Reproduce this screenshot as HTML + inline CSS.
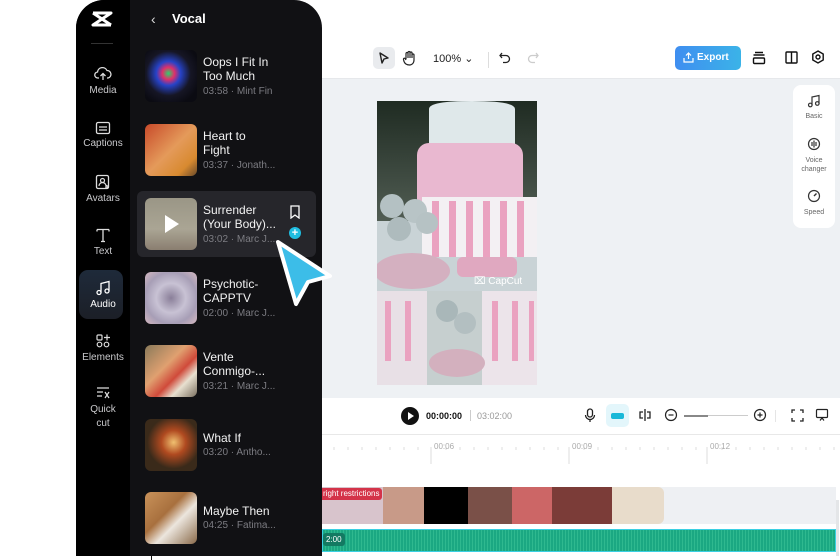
<!DOCTYPE html>
<html><head><meta charset="utf-8"><style>
*{margin:0;padding:0;box-sizing:border-box}
body{width:840px;height:560px;overflow:hidden;background:#fff;font-family:"Liberation Sans",sans-serif;position:relative}
.abs{position:absolute}
.topbar{left:322px;top:42px;width:518px;height:37px;background:#fff;border-bottom:1px solid #e6e8eb}
.canvas{left:322px;top:79px;width:518px;height:319px;background:#eef1f4}
.play{left:322px;top:398px;width:518px;height:37px;background:#fff;border-bottom:1px solid #e8e8e8}
.tl{left:322px;top:435px;width:518px;height:125px;background:#fff}
.panel{left:76px;top:0;width:246px;height:556px;background:#111114;border-radius:28px 28px 0 0;overflow:hidden}
.side{left:0;top:0;width:54px;height:556px;background:#000}
.si{position:absolute;left:0;width:54px;text-align:center;color:#c9c9cc;font-size:10px}
.si svg{display:block;margin:0 auto 3px}
.item{position:absolute;left:69px;width:175px;height:52px}
.th{position:absolute;left:0;top:0;width:52px;height:52px;border-radius:6px}
.tt{position:absolute;left:58px;color:#f2f2f2;font-size:12px;line-height:14px}
.sub{position:absolute;left:58px;color:#7c7c82;font-size:10px}
.rs{right:5px;width:42px;height:143px;background:#fff;border-radius:8px;position:absolute}
.rs div{text-align:center;font-size:7px;color:#666;position:absolute;width:42px}
</style></head><body>
<div class="abs topbar">
 <div class="abs" style="left:51px;top:5px;width:22px;height:22px;background:#e9ebee;border-radius:5px"></div>
 <svg class="abs" style="left:55px;top:9px" width="14" height="14" viewBox="0 0 14 14"><path d="M3 2 L11 7 L7 8 L5 12 Z" fill="none" stroke="#222" stroke-width="1.4" stroke-linejoin="round"/></svg>
 <svg class="abs" style="left:80px;top:8px" width="14" height="16" viewBox="0 0 14 16"><path d="M4 9V3.5a1 1 0 0 1 2 0V8M6 7V2.5a1 1 0 0 1 2 0V8M8 7V3a1 1 0 0 1 2 0v5M10 8V5a1 1 0 0 1 2 0v5c0 3-2 5-4.5 5S3 14 2 11.5L1.5 9.5a1 1 0 0 1 2-.5L4 10" fill="none" stroke="#222" stroke-width="1.2"/></svg>
 <div class="abs" style="left:111px;top:10px;font-size:11px;color:#222">100% ⌄</div>
 <div class="abs" style="left:166px;top:10px;width:1px;height:16px;background:#ddd"></div>
 <svg class="abs" style="left:176px;top:9px" width="13" height="13" viewBox="0 0 13 13"><path d="M4 2L2 4.5 4 7M2 4.5h6a3.5 3.5 0 0 1 0 7H5" fill="none" stroke="#222" stroke-width="1.3"/></svg>
 <svg class="abs" style="left:205px;top:9px" width="13" height="13" viewBox="0 0 13 13"><path d="M9 2l2 2.5L9 7M11 4.5H5a3.5 3.5 0 0 0 0 7h3" fill="none" stroke="#ccc" stroke-width="1.3"/></svg>
 <div class="abs" style="left:353px;top:4px;width:66px;height:24px;border-radius:5px;background:linear-gradient(90deg,#3f8ef0,#3bb3e8);color:#fff;font-size:10px;font-weight:bold;line-height:24px;padding-left:22px">Export</div>
 <svg class="abs" style="left:361px;top:10px" width="11" height="11" viewBox="0 0 11 11"><path d="M5.5 7V1M3 3.5l2.5-2.5L8 3.5M1 6v4h9V6" fill="none" stroke="#fff" stroke-width="1.2"/></svg>
 <svg class="abs" style="left:430px;top:9px" width="14" height="14" viewBox="0 0 14 14"><path d="M3 1.5h8M1.5 4h11" stroke="#111" stroke-width="1.4"/><rect x="1.5" y="7" width="11" height="5.5" rx="1" fill="none" stroke="#111" stroke-width="1.4"/></svg>
 <svg class="abs" style="left:463px;top:9px" width="13" height="13" viewBox="0 0 13 13"><rect x="1" y="1" width="11" height="11" rx="1" fill="none" stroke="#111" stroke-width="1.4"/><path d="M6.5 1v11" stroke="#111" stroke-width="1.4"/></svg>
 <svg class="abs" style="left:489px;top:8px" width="14" height="14" viewBox="0 0 14 14"><path d="M7 1l5.2 3v6L7 13l-5.2-3V4z" fill="none" stroke="#111" stroke-width="1.4"/><circle cx="7" cy="7" r="2" fill="none" stroke="#111" stroke-width="1.4"/></svg>
</div>
<div class="abs canvas">
 <svg class="abs" style="left:55px;top:22px" width="160" height="284" viewBox="0 0 160 284">
  <defs><linearGradient id="bg" x1="0" y1="0" x2="0" y2="1"><stop offset="0" stop-color="#1f2b22"/><stop offset="1" stop-color="#6e7a70"/></linearGradient></defs>
  <rect width="160" height="284" fill="#e9edf0"/>
  <rect width="160" height="190" fill="url(#bg)"/>
  <rect x="0" y="120" width="160" height="70" fill="#c9d3d6"/>
  <path d="M52 8 Q52 0 95 0 Q138 0 138 8 V48 H52 Z" fill="#dfe8ea"/>
  <rect x="40" y="42" width="106" height="68" rx="12" fill="#e9b8d0"/>
  <rect x="45" y="96" width="116" height="60" fill="#f3f0f3"/>
  <g fill="#eaa2c0"><rect x="55" y="100" width="7" height="56"/><rect x="72" y="100" width="7" height="56"/><rect x="89" y="100" width="7" height="56"/><rect x="106" y="100" width="7" height="56"/><rect x="123" y="100" width="7" height="56"/><rect x="140" y="100" width="7" height="56"/></g>
  <rect x="80" y="156" width="60" height="20" rx="6" fill="#e0a8c0"/>
  <circle cx="15" cy="105" r="12" fill="#b4c1c3"/><circle cx="38" cy="110" r="12" fill="#b8c4c6"/><circle cx="22" cy="128" r="12" fill="#aebbbd"/><circle cx="50" cy="122" r="11" fill="#b6c2c4"/>
  <ellipse cx="35" cy="170" rx="38" ry="18" fill="#d4b0c0"/>
  <text x="97" y="183" fill="#fff" font-size="10" font-family="Liberation Sans">⌧ CapCut</text>
  <rect x="0" y="190" width="50" height="94" fill="#e8e0e6"/><rect x="50" y="190" width="55" height="94" fill="#c6cfcf"/><rect x="105" y="190" width="55" height="94" fill="#ece4ea"/>
  <g fill="#eaa2c0"><rect x="8" y="200" width="6" height="60"/><rect x="28" y="200" width="6" height="60"/><rect x="115" y="200" width="6" height="60"/><rect x="135" y="200" width="6" height="60"/><rect x="152" y="200" width="5" height="60"/></g>
  <circle cx="70" cy="210" r="11" fill="#a9b7b9"/><circle cx="88" cy="222" r="11" fill="#b3bfc1"/><ellipse cx="80" cy="262" rx="28" ry="14" fill="#d3b0be"/>
 </svg>
 <div class="rs" style="top:6px">
  <svg style="position:absolute;left:14px;top:9px" width="14" height="14" viewBox="0 0 14 14"><path d="M5 11V3l7-1.5V9.5" fill="none" stroke="#333" stroke-width="1.2"/><circle cx="3.3" cy="11" r="1.8" fill="none" stroke="#333" stroke-width="1.2"/><circle cx="10.3" cy="9.5" r="1.8" fill="none" stroke="#333" stroke-width="1.2"/></svg>
  <div style="top:28px">Basic</div>
  <svg style="position:absolute;left:14px;top:52px" width="14" height="14" viewBox="0 0 14 14"><circle cx="7" cy="7" r="5.5" fill="none" stroke="#333" stroke-width="1.2"/><path d="M5 5v4M7 3.5v7M9 5v4" stroke="#333" stroke-width="1.2"/></svg>
  <div style="top:71px;line-height:9px">Voice<br>changer</div>
  <svg style="position:absolute;left:14px;top:104px" width="14" height="14" viewBox="0 0 14 14"><circle cx="7" cy="7" r="5.5" fill="none" stroke="#333" stroke-width="1.2"/><path d="M7 7l2.5-2.5" stroke="#333" stroke-width="1.4"/></svg>
  <div style="top:124px">Speed</div>
 </div>
</div>
<div class="abs play">
 <div class="abs" style="left:79px;top:9px;width:18px;height:18px;border-radius:50%;background:#111"></div>
 <div class="abs" style="left:86px;top:14px;width:0;height:0;border-left:6px solid #fff;border-top:4px solid transparent;border-bottom:4px solid transparent"></div>
 <div class="abs" style="left:104px;top:13px;font-size:9px;font-weight:bold;color:#111">00:00:00</div>
 <div class="abs" style="left:148px;top:12px;width:1px;height:11px;background:#ccc"></div>
 <div class="abs" style="left:155px;top:13px;font-size:9px;color:#999">03:02:00</div>
 <svg class="abs" style="left:262px;top:10px" width="12" height="16" viewBox="0 0 12 16"><rect x="3.5" y="1" width="5" height="8" rx="2.5" fill="none" stroke="#222" stroke-width="1.3"/><path d="M1.5 7a4.5 4.5 0 0 0 9 0M6 11.5V14" fill="none" stroke="#222" stroke-width="1.3"/></svg>
 <div class="abs" style="left:284px;top:6px;width:23px;height:23px;border-radius:5px;background:#e3f6fb"></div>
 <div class="abs" style="left:289px;top:15px;width:13px;height:6px;border-radius:2px;background:#19b8d8"></div>
 <svg class="abs" style="left:316px;top:10px" width="14" height="14" viewBox="0 0 14 14"><path d="M7 1v12M5 4H2v6h3M9 4h3v6H9" fill="none" stroke="#222" stroke-width="1.3"/></svg>
 <svg class="abs" style="left:342px;top:10px" width="14" height="14" viewBox="0 0 14 14"><circle cx="7" cy="7" r="5.5" fill="none" stroke="#222" stroke-width="1.2"/><path d="M4.5 7h5" stroke="#222" stroke-width="1.2"/></svg>
 <div class="abs" style="left:362px;top:17px;width:64px;height:1px;background:#ccc"></div>
 <div class="abs" style="left:362px;top:16.5px;width:24px;height:2px;background:#888"></div>
 <svg class="abs" style="left:431px;top:10px" width="14" height="14" viewBox="0 0 14 14"><circle cx="7" cy="7" r="5.5" fill="none" stroke="#222" stroke-width="1.2"/><path d="M4.5 7h5M7 4.5v5" stroke="#222" stroke-width="1.2"/></svg>
 <div class="abs" style="left:453px;top:12px;width:1px;height:12px;background:#e5e5e5"></div>
 <svg class="abs" style="left:469px;top:11px" width="13" height="13" viewBox="0 0 13 13"><path d="M1 4V1h3M9 1h3v3M12 9v3H9M4 12H1V9" fill="none" stroke="#222" stroke-width="1.3"/></svg>
 <svg class="abs" style="left:493px;top:10px" width="14" height="14" viewBox="0 0 14 14"><rect x="1.5" y="1.5" width="11" height="8" rx="1" fill="none" stroke="#222" stroke-width="1.2"/><path d="M5 12.5l2-2.5 2 2.5" fill="none" stroke="#222" stroke-width="1.2"/></svg>
</div>
<div class="abs tl">
 <svg class="abs" style="left:0;top:0" width="518" height="40"><g stroke="#ddd" stroke-width="1">
  <path d="M12 12v3M26 12v3M40 12v3M54 12v3M68 12v3M82 12v3M96 12v3M124 12v3M138 12v3M152 12v3M166 12v3M180 12v3M194 12v3M208 12v3M222 12v3M236 12v3M262 12v3M276 12v3M290 12v3M304 12v3M318 12v3M332 12v3M346 12v3M360 12v3M374 12v3M400 12v3M414 12v3M428 12v3M442 12v3M456 12v3M470 12v3M484 12v3M498 12v3M512 12v3"/>
  <path d="M109 12v17M247 12v17M385 12v17"/></g></svg>
 <div class="abs" style="left:112px;top:7px;font-size:8px;color:#aaa">00:06</div>
 <div class="abs" style="left:250px;top:7px;font-size:8px;color:#aaa">00:09</div>
 <div class="abs" style="left:388px;top:7px;font-size:8px;color:#aaa">00:12</div>
 <div class="abs" style="left:0;top:52px;width:514px;height:37px;background:#eef0f3"></div>
 <div class="abs" style="left:0;top:52px;width:342px;height:37px;background:linear-gradient(90deg,#d8c4cc 0 61px,#c89a88 61px 102px,#000 102px 146px,#7a5048 146px 190px,#c66 190px 230px,#7b3c38 230px 290px,#e8dccb 290px 342px);border-radius:0 6px 6px 0"></div>
 <div class="abs" style="left:0;top:53px;height:12px;padding:0 3px 0 1px;background:#d43349;color:#fff;font-size:8px;line-height:12px;border-radius:0 3px 3px 0">right restrictions</div>
 <div class="abs" style="left:0;top:94px;width:514px;height:23px;background:repeating-linear-gradient(90deg,#1ba882 0 2px,#2fb98f 2px 3px);border:1.5px solid #3ad0e2"></div>
 <div class="abs" style="left:1px;top:98px;height:13px;padding:0 3px;background:#137a62;color:#fff;font-size:8px;line-height:13px;border-radius:3px">2:00</div>
 <div class="abs" style="left:514px;top:65px;width:3px;height:56px;background:#e4e6e8"></div>
</div>
<div class="abs" style="left:151px;top:540px;width:1px;height:20px;background:#111"></div>
<div class="abs panel">
 <div class="abs side">
  <svg style="position:absolute;left:15px;top:11px" width="22" height="16" viewBox="0 0 22 16"><path d="M2 2h18L2 14h18M2 2l18 12" fill="none" stroke="#fff" stroke-width="3" stroke-linejoin="round"/></svg>
  <div style="position:absolute;left:15px;top:43px;width:22px;height:1px;background:#333"></div>
  <div class="si" style="top:66px"><svg width="18" height="16" viewBox="0 0 18 16"><path d="M5 12H4a3 3 0 0 1-.5-6A5 5 0 0 1 13 4.5a3.8 3.8 0 0 1 1 7.5h-1M9 14V7.5M6.5 10L9 7.5l2.5 2.5" fill="none" stroke="#ddd" stroke-width="1.3"/></svg>Media</div>
  <div class="si" style="top:121px"><svg width="16" height="14" viewBox="0 0 16 14"><rect x="1.5" y="1.5" width="13" height="11" rx="1.5" fill="none" stroke="#ddd" stroke-width="1.3"/><path d="M4 6h8M4 9h8" stroke="#ddd" stroke-width="1.3"/></svg>Captions</div>
  <div class="si" style="top:174px"><svg width="16" height="16" viewBox="0 0 16 16"><rect x="1.5" y="1.5" width="12" height="13" rx="1.5" fill="none" stroke="#ddd" stroke-width="1.3"/><circle cx="7.5" cy="6.5" r="2" fill="none" stroke="#ddd" stroke-width="1.2"/><path d="M4 12a3.5 3.5 0 0 1 7 0M12 11v4M10 13h4" fill="none" stroke="#ddd" stroke-width="1.2"/></svg>Avatars</div>
  <div class="si" style="top:227px"><svg width="16" height="16" viewBox="0 0 16 16"><path d="M2 2.5h12M8 2.5V14.5M6 14.5h4M2 2.5v2M14 2.5v2" fill="none" stroke="#ddd" stroke-width="1.3"/></svg>Text</div>
  <div style="position:absolute;left:3px;top:270px;width:44px;height:49px;border-radius:9px;background:linear-gradient(#1e2a3a,#1c1f27)"></div>
  <div class="si" style="top:280px;color:#fff"><svg width="16" height="16" viewBox="0 0 16 16"><path d="M6 12.5V3.5l8-2V11" fill="none" stroke="#fff" stroke-width="1.3"/><circle cx="4" cy="12.5" r="2" fill="none" stroke="#fff" stroke-width="1.3"/><circle cx="12" cy="11" r="2" fill="none" stroke="#fff" stroke-width="1.3"/></svg>Audio</div>
  <div class="si" style="top:333px"><svg width="16" height="16" viewBox="0 0 16 16"><rect x="2" y="2" width="5" height="5" rx="1" fill="none" stroke="#ddd" stroke-width="1.2"/><path d="M12 1.5v6M9 4.5h6" stroke="#ddd" stroke-width="1.2"/><circle cx="4.5" cy="11.5" r="2.3" fill="none" stroke="#ddd" stroke-width="1.2"/><circle cx="11.5" cy="11.5" r="2.3" fill="none" stroke="#ddd" stroke-width="1.2"/></svg>Elements</div>
  <div class="si" style="top:386px;line-height:14px"><svg width="16" height="14" viewBox="0 0 16 14"><path d="M2 2h12M2 6h6M2 10h5M10 6l4 6M14 6l-4 6" fill="none" stroke="#ddd" stroke-width="1.2"/></svg>Quick<br>cut</div>
 </div>
 <div class="abs" style="left:75px;top:11px;color:#ddd;font-size:14px">‹</div>
 <div class="abs" style="left:96px;top:11px;color:#fff;font-size:13px;font-weight:bold">Vocal</div>
 <div class="abs" style="left:61px;top:191px;width:179px;height:66px;background:#26262b;border-radius:6px"></div>
 <div class="item" style="top:50px"><div class="th" style="background:radial-gradient(circle at 45% 45%,#2bd36a 0,#e0306a 15%,#2743c8 30%,#161625 55%,#0b0b12 80%)"></div><div class="tt" style="top:5px">Oops I Fit In<br>Too Much</div><div class="sub" style="top:36px">03:58 · Mint Fin</div></div>
 <div class="item" style="top:124px"><div class="th" style="background:linear-gradient(135deg,#c84a2a,#e49a5a 50%,#d88a30 80%,#6a4a2a)"></div><div class="tt" style="top:5px">Heart to<br>Fight</div><div class="sub" style="top:36px">03:37 · Jonath...</div></div>
 <div class="item" style="top:198px"><div class="th" style="background:linear-gradient(#9a9686,#aaa594 60%,#8a7e70)"></div><div style="position:absolute;left:20px;top:17px;border-left:14px solid #fff;border-top:9px solid transparent;border-bottom:9px solid transparent"></div><div class="tt" style="top:5px">Surrender<br>(Your Body)...</div><div class="sub" style="top:36px">03:02 · Marc J...</div>
  <svg style="position:absolute;left:144px;top:7px" width="12" height="14" viewBox="0 0 12 14"><path d="M2 1h8v12L6 10l-4 3z" fill="none" stroke="#fff" stroke-width="1.3"/></svg>
  <div style="position:absolute;left:144px;top:29px;width:12px;height:12px;border-radius:50%;background:#1fbde0;color:#fff;font-size:11px;line-height:12px;text-align:center;font-weight:bold">+</div></div>
 <div class="item" style="top:272px"><div class="th" style="background:radial-gradient(circle,#8a7f99,#c8c2d4 40%,#a79eb6 70%,#d5b8c0)"></div><div class="tt" style="top:5px">Psychotic-<br>CAPPTV</div><div class="sub" style="top:36px">02:00 · Marc J...</div></div>
 <div class="item" style="top:345px"><div class="th" style="background:linear-gradient(135deg,#8a7a5a,#e0a070 40%,#d04a3a 60%,#e8e0d0 75%,#7a7060)"></div><div class="tt" style="top:5px">Vente<br>Conmigo-...</div><div class="sub" style="top:36px">03:21 · Marc J...</div></div>
 <div class="item" style="top:419px"><div class="th" style="background:radial-gradient(circle at 55% 45%,#f0c070,#b04a20 30%,#3a2a1a 65%)"></div><div class="tt" style="top:12px">What If</div><div class="sub" style="top:28px">03:20 · Antho...</div></div>
 <div class="item" style="top:492px"><div class="th" style="background:linear-gradient(135deg,#c9925a,#a8703e 40%,#ece6de 60%,#8a6a4a)"></div><div class="tt" style="top:12px">Maybe Then</div><div class="sub" style="top:28px">04:25 · Fatima...</div></div>
</div>
<svg class="abs" style="left:268px;top:232px" width="70" height="80" viewBox="0 0 70 80"><path d="M10 10 L62 44 L40 50 L28 72 Z" fill="#3cbde8" stroke="#fff" stroke-width="4" stroke-linejoin="round"/></svg>
</body></html>
